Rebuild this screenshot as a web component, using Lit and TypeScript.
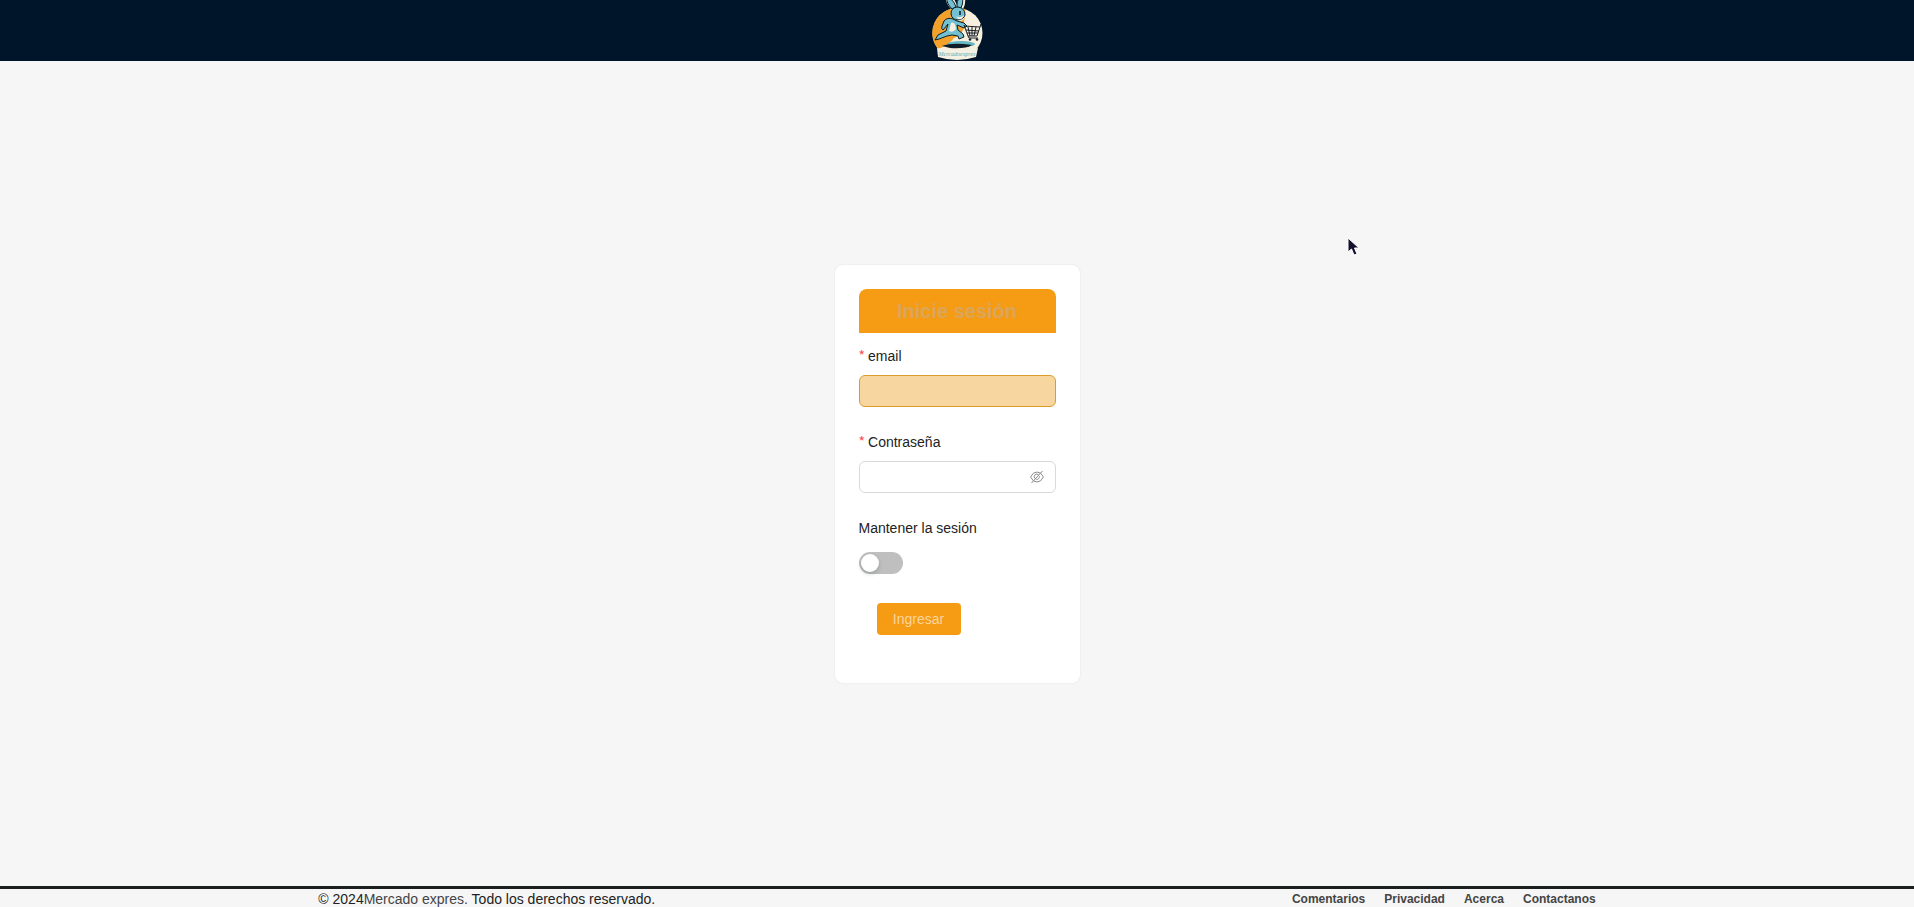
import { LitElement, html, css } from "lit";
import { customElement, state } from "lit/decorators.js";

@customElement("market-logo")
class MarketLogo extends LitElement {
  static styles = css`
    :host { display: block; line-height: 0; }
    text { font: italic 6px "Liberation Serif", serif; fill: #58aeb2; }
  `;
  render() {
    return html`
      <svg width="54" height="61" viewBox="0 0 54 61" role="img" aria-label="Mercado expres">
        <circle cx="27.500" cy="33" r="25" fill="#f8f0df" />
        <path d="M27 8A25 25 0 0 0 8 49Q19 45 24 38Q35 35 34 22Q36 14 35 9Z" fill="#f4a12c" />
        <ellipse cx="31" cy="44" rx="14" ry="3" fill="#66b8c2" />
        <path d="M12 46Q22 42 42 45Q36 49 20 48Z" fill="#101c26" />
        <path id="outline" d="M22 10Q15 3 16-3L23-3L27 5Q27 0 30-3L35-3Q36 4 33 9Q38 14 33 20L28 22" fill="#f8f0df" />
        <g fill="#72c0d0" stroke="#0d1d2b" stroke-width="1" stroke-linejoin="round">
          <path d="M22 9Q16 3 17-2Q23-2 26 7Z" />
          <path d="M27 7Q26 1 30-3Q35-1 31 8Z" />
          <path d="M23 19Q17 17 14 21L12 26Q11 29 13 30L18 24L16 31L8 35L5 40L9 39L17 36L22 35L28 36L29 39L34 37L33 34L28 30L27 25L34 28L37 26L34 23L27 21Z" />
          <path d="M21 14Q21 7 28 7Q35 8 35 15Q34 19 28 20Q22 20 21 14Z" />
        </g>
        <path d="M30 11V15" stroke="#0d1d2b" stroke-width="1.500" />
        <path d="M26 16Q30 19 34 15Q33 20 28 19Z" fill="#f8f0df" />
        <path d="M21 23Q25 21 26 29Q23 33 19 31Z" fill="#f8f0df" />
        <g fill="none" stroke="#17212a" stroke-width="1">
          <path d="M34 26L50 27L47 36H38L34 25M51 24L50 27M38 27L40 36M42 27V36M46 27L44 36M36 30L49 31M37 33L48 33M38 36L39 38H48" />
        </g>
        <circle cx="40" cy="39.500" r="1.300" fill="#17212a" />
        <circle cx="47" cy="39.500" r="1.300" fill="#17212a" />
        <path d="M7 48Q27 54 48 48L46 57Q27 63 8 57Z" fill="#f3f1e4" />
        <text x="27" y="56" text-anchor="middle">Mercadoexpres</text>
      </svg>
    `;
  }
}

@customElement("app-root")
class AppRoot extends LitElement {
  @state() private showPassword = false;

  static styles = css`
    * { box-sizing: border-box; }
    :host {
      display: flex;
      flex-direction: column;
      height: 100vh;
      overflow: hidden;
      background: #f6f6f6;
      color: #222;
      font: 14px/22px "Liberation Sans", Arial, sans-serif;
    }
    header {
      display: flex;
      justify-content: center;
      background: #001529;
    }
    main {
      flex: 1;
      display: flex;
      align-items: center;
      justify-content: center;
    }
    .card {
      padding: 24px;
      border-radius: 8px;
      background: #fff;
      box-shadow: 0 0 2px rgba(0, 0, 0, 0.1);
    }
    .title {
      margin: 0 0 12px;
      border-radius: 8px 8px 0 0;
      background: #f59b14;
      color: #dba65a;
      font-size: 20px;
      line-height: 44px;
      text-align: center;
    }
    .item {
      display: flex;
      flex-direction: column;
      align-items: flex-start;
      gap: 8px;
      margin-bottom: 24px;
    }
    .required::before {
      content: "*";
      margin-right: 3px;
      color: #ff4d4f;
      font-family: "Noto Sans CJK SC", sans-serif;
      line-height: 1;
    }
    .field {
      display: flex;
      align-items: center;
      height: 32px;
      border: 1px solid #d9d9d9;
      border-radius: 6px;
      padding: 0 11px;
      background: #fff;
    }
    .field.email { border-color: #dc9c2c; background: #f8d6a0; }
    input.text {
      width: 173px;
      border: 0;
      padding: 0;
      outline: 0;
      background: none;
      font: inherit;
    }
    .field.password input { width: 155px; margin-right: 4px; }
    .eye {
      display: flex;
      border: 0;
      padding: 0;
      background: none;
      color: #8c8c8c;
      cursor: pointer;
    }
    .control { display: flex; align-items: center; height: 32px; }
    .switch {
      appearance: none;
      width: 44px;
      height: 22px;
      margin: 0;
      border-radius: 11px;
      padding: 2px;
      background: #bfbfbf;
      cursor: pointer;
    }
    .switch::before {
      content: "";
      display: block;
      width: 18px;
      height: 18px;
      border-radius: 50%;
      background: #fff;
      box-shadow: 0 2px 4px rgba(0, 35, 11, 0.2);
    }
    .switch:checked { background: #f59b14; }
    .switch:checked::before { margin-left: auto; }
    .submit {
      min-width: 84px;
      height: 32px;
      margin-left: 18px;
      border: 0;
      border-radius: 4px;
      padding: 0 16px;
      background: #f59b14;
      color: #fad59c;
      font: inherit;
      cursor: pointer;
    }
    footer {
      display: flex;
      justify-content: space-around;
      height: 21px;
      border-top: 3px solid #1c1f20;
      line-height: 20px;
    }
    footer a { color: #444; text-decoration: none; }
    nav { display: flex; gap: 19px; font-size: 12px; font-weight: bold; }
    .pointer { position: absolute; left: 1347px; top: 237px; }
  `;

  render() {
    return html`
      <header><market-logo></market-logo></header>
      <main>
        <form class="card" @submit=${(e: Event) => e.preventDefault()}>
          <h1 class="title">Inicie sesión</h1>
          <div class="item">
            <label class="required" for="email">email</label>
            <div class="field email"><input class="text" id="email" type="email" /></div>
          </div>
          <div class="item">
            <label class="required" for="password">Contraseña</label>
            <div class="field password">
              <input class="text" id="password" type=${this.showPassword ? "text" : "password"} />
              <button class="eye" type="button" aria-label="Mostrar contraseña"
                @click=${() => (this.showPassword = !this.showPassword)}>
                <svg width="14" height="14" viewBox="0 0 14 14" fill="none" stroke="currentColor">
                  <path d="M.6 7Q2.800 2 7 2Q11.200 2 13.400 7Q11.200 12 7 12Q2.800 12 .6 7Z" />
                  <path d="M5 8.500A2.500 2.500 0 0 1 8.500 4.900M9.300 6.200A2.500 2.500 0 0 1 6.200 9.300" />
                  <path d="M1.500 13L12.500 1" />
                </svg>
              </button>
            </div>
          </div>
          <div class="item">
            <label for="keep">Mantener la sesión</label>
            <div class="control"><input class="switch" id="keep" type="checkbox" role="switch" /></div>
          </div>
          <div class="item"><button class="submit" type="submit">Ingresar</button></div>
        </form>
      </main>
      <footer>
        <span>© 2024<a href="#">Mercado expres.</a> Todo los derechos reservado.</span>
        <nav>
          <a href="#">Comentarios</a>
          <a href="#">Privacidad</a>
          <a href="#">Acerca</a>
          <a href="#">Contactanos</a>
        </nav>
      </footer>
      <svg class="pointer" width="14" height="20" viewBox="0 0 14 20" aria-hidden="true">
        <path d="M1 1V15L4.500 12L7 18L10 17L7.500 11H12Z" fill="#15102e" stroke="#fff" />
      </svg>
    `;
  }
}
